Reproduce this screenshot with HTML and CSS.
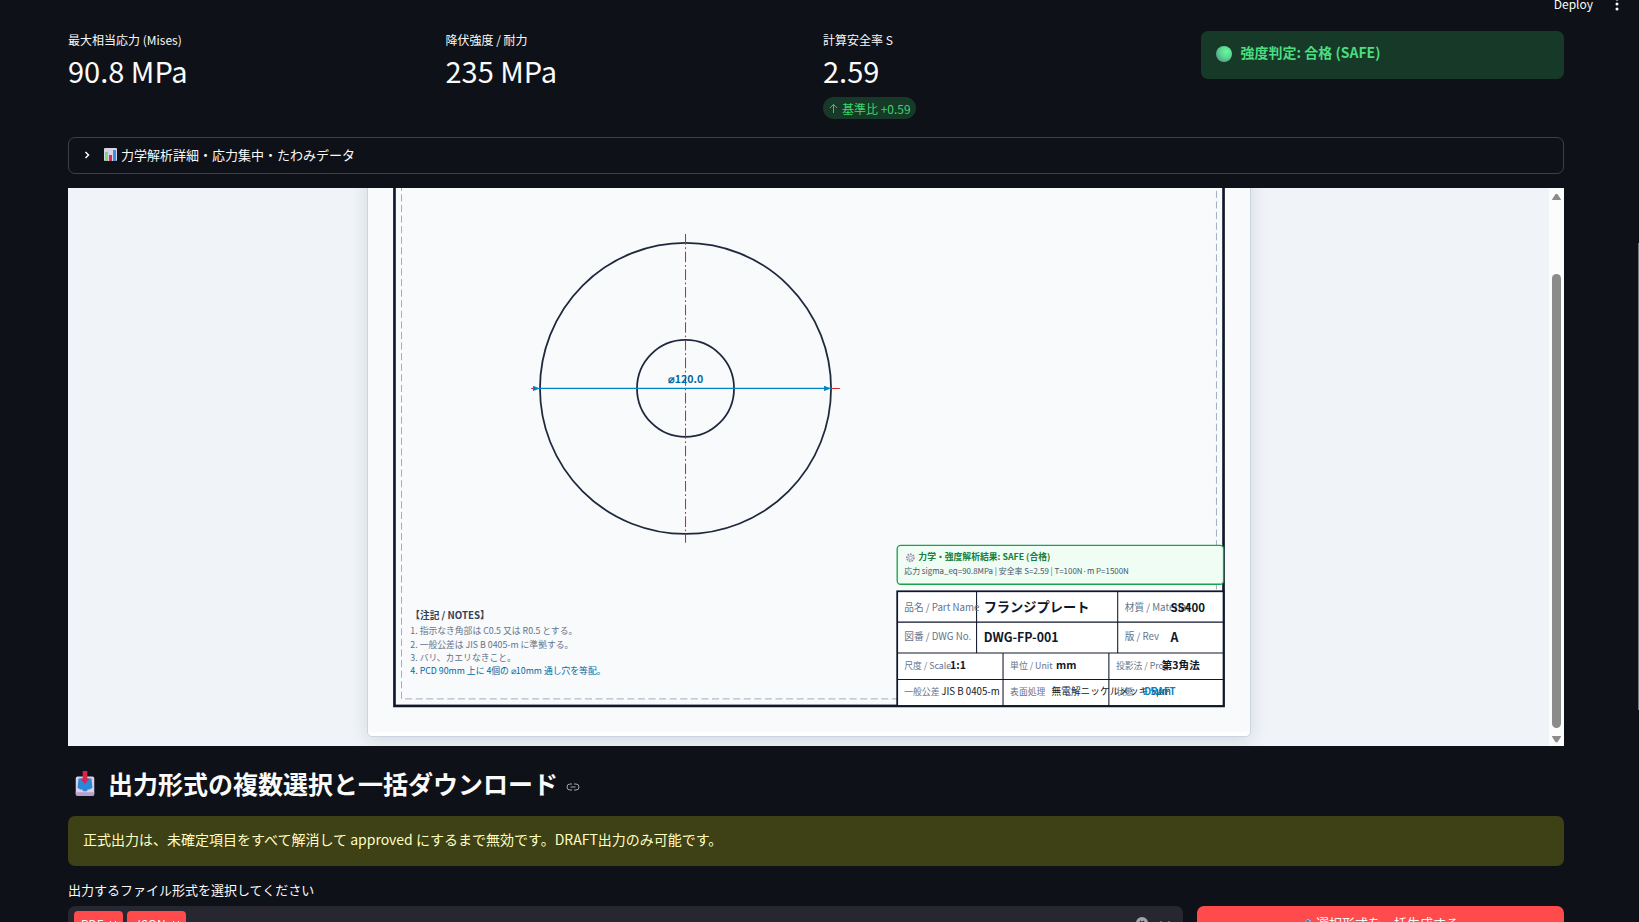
FILE: index.html
```
<!DOCTYPE html>
<html lang="ja">
<head>
<meta charset="utf-8">
<meta name="viewport" content="width=device-width, initial-scale=1">
<title>強度解析ダッシュボード</title>
<link rel="stylesheet" href="styles.css">
</head>
<body>
<header class="toolbar">
  <button class="toolbar-button" type="button">Deploy</button>
  <button class="toolbar-button toolbar-menu" type="button" aria-label="メニュー">
    <svg class="dots" viewBox="0 0 4 14" aria-hidden="true"><circle cx="2" cy="2" r="1.5"/><circle cx="2" cy="7" r="1.5"/><circle cx="2" cy="12" r="1.5"/></svg>
  </button>
</header>

<main class="content">
  <section class="metrics">
    <div class="metric">
      <div class="metric-label">最大相当応力 (Mises)</div>
      <div class="metric-value">90.8 MPa</div>
    </div>
    <div class="metric">
      <div class="metric-label">降伏強度 / 耐力</div>
      <div class="metric-value">235 MPa</div>
    </div>
    <div class="metric">
      <div class="metric-label">計算安全率 S</div>
      <div class="metric-value">2.59</div>
      <div class="metric-delta">
        <svg class="delta-icon" viewBox="0 0 10 12" aria-hidden="true"><path d="M5 11V1.5M1 5.5 5 1.5l4 4"/></svg>
        <span>基準比 +0.59</span>
      </div>
    </div>
    <div class="alert alert-success">
      <svg class="ball" viewBox="0 0 16 16" aria-hidden="true">
        <defs><radialGradient id="ball-fill" cx="65%" cy="35%" r="70%"><stop offset="0" stop-color="#6cf5a0"/><stop offset=".55" stop-color="#56d890"/><stop offset="1" stop-color="#5a9c8c"/></radialGradient></defs>
        <circle cx="8" cy="8" r="8" fill="url(#ball-fill)"/>
      </svg>
      <strong>強度判定: 合格 (SAFE)</strong>
    </div>
  </section>

  <details class="expander">
    <summary class="expander-head">
      <svg class="chevron" viewBox="0 0 6 8" aria-hidden="true"><path d="M1.5 1 4.5 4l-3 3"/></svg>
      <svg class="chart" viewBox="0 0 13 13" aria-hidden="true"><rect width="13" height="13" rx="1" fill="#d9d3e6"/><rect x="1" y="4" width="3" height="9" fill="#7fd67a"/><rect x="5" y="7" width="3" height="6" fill="#e0245e"/><rect x="9" y="2" width="3" height="11" fill="#3b8fe0"/></svg>
      <span>力学解析詳細・応力集中・たわみデータ</span>
    </summary>
  </details>

  <section class="viewer">
    <div class="viewer-canvas">
      <div class="paper">
        <svg class="drawing" viewBox="0 0 1000 700" role="img" aria-label="フランジプレート図面">
          <defs>
            <marker id="arrow" viewBox="0 0 10 10" refX="10" refY="5" markerUnits="userSpaceOnUse" markerWidth="8" markerHeight="6" preserveAspectRatio="none" orient="0"><path d="M0 0 10 5 0 10z" fill="#0284c7"/></marker>
          </defs>
          <rect width="1000" height="700" fill="#f8fafc"/>
          <rect class="frame" x="30" y="30" width="940" height="640"/>
          <rect class="frame-inner" x="38" y="38" width="924" height="624"/>

          <circle class="outline" cx="360" cy="310" r="165"/>
          <circle class="outline" cx="360" cy="310" r="55"/>
          <path class="center-line" d="M185 310H535M360 135V485"/>
          <path class="dimension" d="M195 310H525" marker-start="url(#arrow)" marker-end="url(#arrow)"/>
          <text class="dimension-text" x="360" y="304">⌀120.0</text>

          <text class="notes-title" x="48" y="571">【注記 / NOTES】</text>
          <text class="note" x="48" y="589">1. 指示なき角部は C0.5 又は R0.5 とする。</text>
          <text class="note" x="48" y="604">2. 一般公差は JIS B 0405-m に準拠する。</text>
          <text class="note" x="48" y="619">3. バリ、カエリなきこと。</text>
          <text class="note note-accent" x="48" y="634">4. PCD 90mm 上に 4個の ⌀10mm 通し穴を等配。</text>

          <rect class="result" x="600" y="488" width="370" height="44" rx="4"/>
          <g class="gear"><circle cx="615" cy="502" r="2"/><circle class="gear-teeth" cx="615" cy="502" r="4"/></g>
          <text class="result-title" x="624" y="505">力学・強度解析結果: SAFE (合格)</text>
          <text class="result-text" x="608" y="520">応力 sigma_eq=90.8MPa | 安全率 S=2.59 | T=100N·m P=1500N</text>

          <rect class="block" x="600" y="540" width="370" height="130"/>
          <path class="block-rule" d="M600 575H970M600 610H970M600 640H970"/>
          <path class="block-rule" d="M690 540V610M850 540V610M720 610V670M840 610V670"/>

          <text class="key" x="608" y="562">品名 / Part Name</text>
          <text class="val val-name" x="698" y="563">フランジプレート</text>
          <text class="key" x="858" y="562">材質 / Material</text>
          <text class="val" x="910" y="564">SS400</text>

          <text class="key" x="608" y="595">図番 / DWG No.</text>
          <text class="val val-number" x="698" y="598">DWG-FP-001</text>
          <text class="key" x="858" y="595">版 / Rev</text>
          <text class="val val-number" x="910" y="598">A</text>

          <text class="key key-small" x="608" y="628">尺度 / Scale</text>
          <text class="val val-small" x="660" y="628">1:1</text>
          <text class="key key-small" x="728" y="628">単位 / Unit</text>
          <text class="val val-small" x="780" y="628">mm</text>
          <text class="key key-small" x="848" y="628">投影法 / Proj.</text>
          <text class="val val-small" x="900" y="628">第3角法</text>

          <text class="key key-small" x="608" y="658">一般公差</text>
          <text class="val-plain" x="650" y="658">JIS B 0405-m</text>
          <text class="key key-small" x="728" y="658">表面処理</text>
          <text class="val-plain" x="775" y="658">無電解ニッケルメッキ 5μm</text>
          <text class="key key-small" x="848" y="658">状態</text>
          <text class="val val-draft" x="880" y="658">DRAFT</text>
        </svg>
      </div>
    </div>
    <div class="scrollbar" aria-hidden="true">
      <svg class="scroll-arrow" viewBox="0 0 10 8"><path d="M4 1h2l4 6v1H0V7z"/></svg>
      <div class="scroll-thumb"></div>
      <svg class="scroll-arrow" viewBox="0 0 10 8"><path d="M4 7h2l4-6V0H0v1z"/></svg>
    </div>
  </section>

  <h2 class="heading">
    <svg class="inbox" viewBox="0 0 20 27" aria-hidden="true"><rect y="6" width="20" height="20" rx="2" fill="#d9d2e6"/><path d="M0 23h20v2q0 2-2 2H2q-2 0-2-2z" fill="#b79fd0"/><path d="M3 8h14l1 10-3 2h-2l-1 2H8l-1-2H5l-3-2z" fill="#2b88d8"/><path d="M7.500 0h5v8H15l-5 6-5-6h2.500z" fill="#d8254f"/></svg>
    <span>出力形式の複数選択と一括ダウンロード</span>
    <a class="anchor" href="#" aria-label="見出しへのリンク"><svg class="anchor-icon" viewBox="0 0 14 8" aria-hidden="true"><path d="M6 1H4a3 3 0 0 0 0 6h2M8 1h2a3 3 0 0 1 0 6H8M4.500 4h5"/></svg></a>
  </h2>

  <div class="alert alert-warning">正式出力は、未確定項目をすべて解消して approved にするまで無効です。DRAFT出力のみ可能です。</div>

  <label class="field-label" for="formats">出力するファイル形式を選択してください</label>
  <div class="export">
    <div class="multiselect">
      <span class="tag">PDF<button class="tag-close" type="button" aria-label="PDFを外す"><svg class="cross" viewBox="0 0 8 8" aria-hidden="true"><path d="M1 1l6 6M7 1 1 7"/></svg></button></span>
      <span class="tag">JSON<button class="tag-close" type="button" aria-label="JSONを外す"><svg class="cross" viewBox="0 0 8 8" aria-hidden="true"><path d="M1 1l6 6M7 1 1 7"/></svg></button></span>
      <input class="multiselect-input" id="formats" type="text">
      <button class="icon-button" type="button" aria-label="すべて外す"><svg class="clear" viewBox="0 0 12 12" aria-hidden="true"><circle cx="6" cy="6" r="6" fill="#a3a4a9"/><path d="M4 4l4 4M8 4 4 8" stroke="#262730" stroke-width="1.500"/></svg></button>
      <button class="icon-button" type="button" aria-label="開く"><svg class="down" viewBox="0 0 12 7" aria-hidden="true"><path d="M1.500 1 6 5.500 10.500 1"/></svg></button>
    </div>
    <button class="primary" type="button">
      <svg class="rocket" viewBox="0 0 12 12" aria-hidden="true"><path d="M11 0q0 5-4 8L5 10 2 7l2-3q2-3 7-4z" fill="#c9c3dc"/><path d="M11 0 8 1l2 2z" fill="#d8254f"/><circle cx="7" cy="4" r="2" fill="#2b88d8"/><path d="M4 4 1 5 0 8l3-1zM8 8l-1 3-3 1 1-3z" fill="#d8254f"/></svg>
      <span>選択形式を一括生成する</span>
    </button>
  </div>
</main>
<div class="page-scroll" aria-hidden="true"></div>
</body>
</html>
```

FILE: styles.css
```
* {
  box-sizing: border-box;
}

html {
  background: #0e1117;
}

body {
  margin: 0;
  height: 100vh;
  overflow: hidden;
  background: #0e1117;
  color: #fafafa;
  font-family: "Noto Sans CJK JP", "Noto Sans", sans-serif;
  font-size: 14px;
  line-height: 20px;
}

svg {
  display: block;
  flex: none;
}

button {
  margin: 0;
  padding: 0;
  border: 0;
  background: none;
  color: inherit;
  font: inherit;
  cursor: pointer;
}

/* Top toolbar */
.toolbar {
  display: flex;
  align-items: center;
  justify-content: flex-end;
  gap: 22px;
  height: 8px;
  padding-right: 20px;
}

.toolbar-button {
  font-size: 12px;
}

.dots {
  width: 4px;
  height: 14px;
  fill: #fafafa;
}

.content {
  display: flex;
  flex-direction: column;
  padding: 23px 75px 40px 68px;
}

/* Metrics */
.metrics {
  display: grid;
  grid-template-columns: repeat(4, 1fr);
  align-items: start;
  gap: 14px;
  margin-bottom: 18px;
}

.metric-label {
  font-size: 12px;
  line-height: 18px;
}

.metric-value {
  font-size: 29px;
  line-height: 42px;
}

.metric-delta {
  display: inline-flex;
  align-items: center;
  gap: 4px;
  height: 22px;
  margin-top: 6px;
  padding: 2px 5px 0 6px;
  border-radius: 11px;
  background: #173928;
  color: #3dd56d;
  font-size: 12px;
  vertical-align: top;
}

.delta-icon {
  width: 9px;
  height: 11px;
  margin-bottom: 2px;
  fill: none;
  stroke: currentColor;
}

/* Alerts */
.alert {
  padding: 13px 15px;
  border-radius: 7px;
}

.alert-success {
  display: flex;
  align-items: flex-start;
  gap: 9px;
  padding-top: 11px;
  height: 48px;
  background: #173928;
  color: #4ade80;
}

.ball {
  width: 16px;
  height: 16px;
  margin-top: 4px;
}

.alert-warning {
  height: 50px;
  background: #3e4016;
  color: #ffffc2;
}

/* Expander */
.expander {
  margin-bottom: 14px;
  border: 1px solid #3e4044;
  border-radius: 7px;
}

.expander-head {
  display: flex;
  align-items: center;
  height: 35px;
  padding: 0 15px 2px;
  font-size: 13px;
  list-style: none;
  cursor: pointer;
}

.chevron {
  width: 6px;
  height: 8px;
  margin-right: 14px;
  fill: none;
  stroke: #fafafa;
  stroke-width: 1.5;
}

.chart {
  width: 13px;
  height: 13px;
  margin-right: 4px;
}

/* Drawing viewer */
.viewer {
  display: flex;
  height: 558px;
  overflow: hidden;
  background: #f0f4f8;
}

.viewer-canvas {
  flex: 1;
  display: flex;
  align-items: flex-end;
  justify-content: center;
  padding: 0 9px 9px;
  overflow: hidden;
}

.paper {
  width: 100%;
  max-width: 884px;
  padding-bottom: 4px;
  border: 1px solid #cbd5e1;
  border-radius: 5px;
  background: #ffffff;
  box-shadow: 0 4px 18px rgba(15, 23, 42, 0.12);
}

.drawing {
  width: 100%;
  height: auto;
}

.scrollbar {
  display: flex;
  flex-direction: column;
  align-items: center;
  width: 15px;
  padding: 5px 0 3px;
  background: #fcfcfc;
}

.scroll-arrow {
  width: 9px;
  height: 7px;
  fill: #8b8b8b;
}

.scroll-thumb {
  flex: 1;
  width: 9px;
  margin: 74px 0 8px;
  border-radius: 5px;
  background: #8b8b8b;
}

.frame {
  fill: none;
  stroke: #0f172a;
  stroke-width: 3;
}

.frame-inner {
  fill: none;
  stroke: #94a3b8;
  stroke-dasharray: 8 4;
}

.outline {
  fill: none;
  stroke: #1e293b;
  stroke-width: 2;
}

.center-line {
  fill: none;
  stroke: #dc2626;
  stroke-width: 1.2;
  stroke-dasharray: 12 3 2 3;
}

.dimension {
  stroke: #0284c7;
  stroke-width: 1.5;
}

.dimension-text {
  fill: #0369a1;
  font-size: 12px;
  font-weight: 700;
  text-anchor: middle;
}

.notes-title {
  fill: #334155;
  font-size: 11px;
  font-weight: 700;
}

.note {
  fill: #64748b;
  font-size: 10px;
}

.note-accent {
  fill: #0369a1;
}

.result {
  fill: #f0fdf4;
  stroke: #16a34a;
  stroke-width: 1.5;
}

.gear {
  fill: none;
  stroke: #a78bba;
}

.gear-teeth {
  stroke-width: 2;
  stroke-dasharray: 2 1;
}

.result-title {
  fill: #15803d;
  font-size: 10px;
  font-weight: 700;
}

.result-text {
  fill: #475569;
  font-size: 9px;
}

.block {
  fill: #ffffff;
  stroke: #0f172a;
  stroke-width: 2;
}

.block-rule {
  fill: none;
  stroke: #0f172a;
  stroke-width: 1.2;
}

.key {
  fill: #64748b;
  font-size: 11px;
}

.key-small {
  font-size: 10px;
}

.val {
  fill: #0f172a;
  font-size: 13px;
  font-weight: 700;
}

.val-name {
  font-size: 15px;
}

.val-number {
  font-size: 14px;
}

.val-small {
  font-size: 12px;
}

.val-plain {
  fill: #0f172a;
  font-size: 11px;
}

.val-draft {
  fill: #0284c7;
  font-size: 11px;
}

/* Export section */
.heading {
  display: flex;
  align-items: center;
  height: 42px;
  margin: 16px 0 12px;
  padding-left: 7px;
  font-size: 25px;
  line-height: 34px;
  font-weight: 700;
}

.inbox {
  width: 20px;
  height: 25px;
  margin-right: 13px;
}

.anchor {
  margin: 8px 0 0 8px;
}

.anchor-icon {
  width: 14px;
  height: 8px;
  fill: none;
  stroke: #a3a5a9;
}

.field-label {
  margin: 14px 0 6px;
  font-size: 13px;
}

.export {
  display: flex;
  gap: 14px;
}

.multiselect {
  display: flex;
  align-items: center;
  gap: 4px;
  width: calc(75% - 7px);
  height: 36px;
  padding: 0 12px 0 6px;
  border-radius: 7px;
  background: #262730;
}

.tag {
  display: flex;
  align-items: center;
  gap: 6px;
  height: 26px;
  padding: 0 6px 0 7px;
  border-radius: 4px;
  background: #ff4b4b;
  font-size: 12px;
}

.cross {
  width: 8px;
  height: 8px;
  fill: none;
  stroke: #fafafa;
}

.multiselect-input {
  flex: 1;
  min-width: 0;
  border: 0;
  outline: 0;
  background: transparent;
  color: inherit;
  font: inherit;
}

.icon-button {
  margin-left: 7px;
  padding-bottom: 2px;
}

.clear {
  width: 12px;
  height: 12px;
}

.down {
  width: 12px;
  height: 7px;
  fill: none;
  stroke: #a3a4a9;
}

.primary {
  display: flex;
  align-items: center;
  justify-content: center;
  gap: 4px;
  width: calc(25% - 7px);
  height: 36px;
  padding-bottom: 2px;
  border-radius: 7px;
  background: #ff4b4b;
  font-size: 13px;
}

.rocket {
  width: 10px;
  height: 10px;
}

.page-scroll {
  position: fixed;
  top: 243px;
  right: 0;
  width: 1px;
  height: 467px;
  background: #75777a;
}
```
